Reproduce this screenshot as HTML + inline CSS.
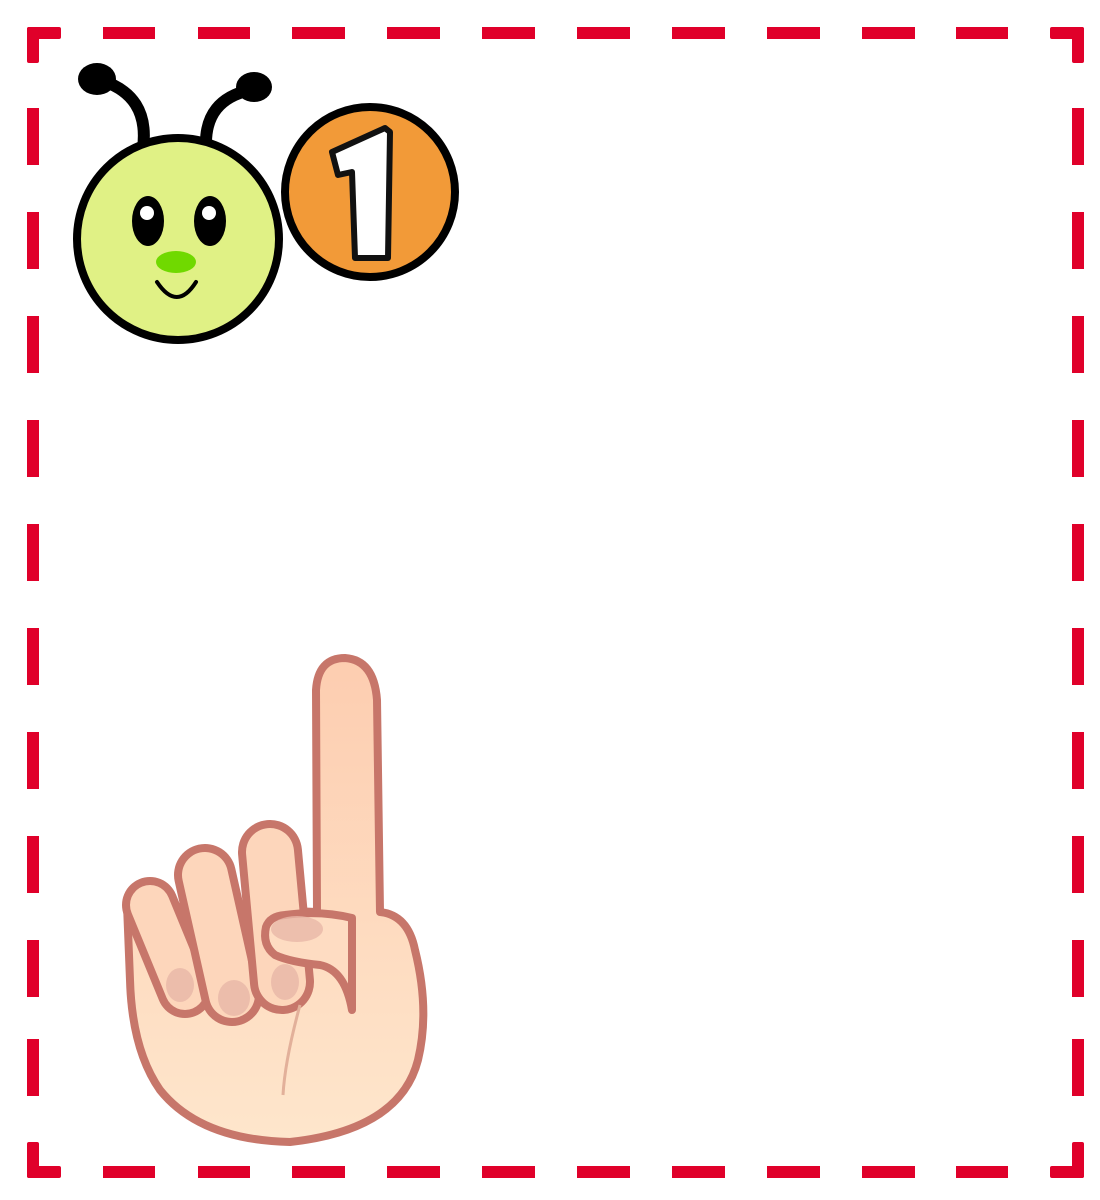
<!DOCTYPE html>
<html><head><meta charset="utf-8"><style>html,body{margin:0;padding:0;background:#fff;width:1100px;height:1200px;overflow:hidden}</style></head>
<body>
<svg width="1100" height="1200" viewBox="0 0 1100 1200" xmlns="http://www.w3.org/2000/svg">
<g fill="#e0002a">
<rect x="27" y="27" width="34" height="12" rx="2"/><rect x="27" y="27" width="12" height="36" rx="2"/>
<rect x="1050" y="27" width="34" height="12" rx="2"/><rect x="1072" y="27" width="12" height="36" rx="2"/>
<rect x="27" y="1166" width="34" height="12" rx="2"/><rect x="27" y="1142" width="12" height="36" rx="2"/>
<rect x="1050" y="1166" width="34" height="12" rx="2"/><rect x="1072" y="1142" width="12" height="36" rx="2"/>
<g id="h">
<rect x="103" y="27" width="52" height="12"/><rect x="198" y="27" width="52" height="12"/><rect x="292" y="27" width="53" height="12"/><rect x="387" y="27" width="53" height="12"/><rect x="482" y="27" width="53" height="12"/><rect x="577" y="27" width="53" height="12"/><rect x="672" y="27" width="53" height="12"/><rect x="767" y="27" width="53" height="12"/><rect x="862" y="27" width="53" height="12"/><rect x="956" y="27" width="52" height="12"/>
</g>
<use href="#h" y="1139"/>
<g id="v">
<rect x="27" y="108" width="12" height="57"/><rect x="27" y="212" width="12" height="57"/><rect x="27" y="316" width="12" height="57"/><rect x="27" y="420" width="12" height="57"/><rect x="27" y="524" width="12" height="57"/><rect x="27" y="628" width="12" height="57"/><rect x="27" y="732" width="12" height="57"/><rect x="27" y="836" width="12" height="57"/><rect x="27" y="940" width="12" height="57"/><rect x="27" y="1039" width="12" height="57"/>
</g>
<use href="#v" x="1045"/>
</g>

<!-- caterpillar -->
<g stroke="#000" stroke-linecap="round" fill="none" stroke-width="12">
<path d="M100 80 Q150 95 143 148"/>
<path d="M250 90 Q205 100 206 145"/>
</g>
<ellipse cx="97" cy="79" rx="19" ry="16" fill="#000"/>
<ellipse cx="254" cy="87" rx="18" ry="15" fill="#000"/>
<circle cx="178" cy="239" r="101" fill="#e0f185" stroke="#000" stroke-width="8"/>
<ellipse cx="148" cy="221" rx="16" ry="25" fill="#000"/>
<ellipse cx="210" cy="221" rx="16" ry="25" fill="#000"/>
<circle cx="147" cy="213" r="7" fill="#fff"/>
<circle cx="209" cy="213" r="7" fill="#fff"/>
<ellipse cx="176" cy="262" rx="20" ry="11" fill="#70d900"/>
<path d="M157 282 Q177 312 196 282" stroke="#000" stroke-width="4" fill="none" stroke-linecap="round"/>
<circle cx="370" cy="192" r="85" fill="#f29a38" stroke="#000" stroke-width="8"/>
<path d="M332 152 L385 128 L390 132 L388 258 L355 258 L352 172 L338 175 Z" fill="#fff" stroke="#111" stroke-width="6" stroke-linejoin="round"/>

<!-- hand -->
<defs><linearGradient id="sk" x1="0" y1="0" x2="0" y2="1"><stop offset="0" stop-color="#fdcdb0"/><stop offset="1" stop-color="#fee6cc"/></linearGradient></defs>
<g stroke="#c7766a" stroke-width="8" stroke-linejoin="round" fill="url(#sk)">
<path d="M317 912 L316 690 Q318 658 345 658 Q374 660 377 700 L380 912 Q408 915 415 950 Q430 1010 418 1060 Q400 1130 290 1142 Q200 1140 160 1090 Q132 1050 130 980 L127 905 Z"/>
</g>
<g stroke-linecap="round" fill="none">
<line x1="150" y1="905" x2="185" y2="990" stroke="#c7766a" stroke-width="56"/>
<line x1="150" y1="905" x2="185" y2="990" stroke="#fdd6bb" stroke-width="40"/>
<line x1="205" y1="875" x2="232" y2="995" stroke="#c7766a" stroke-width="62"/>
<line x1="205" y1="875" x2="232" y2="995" stroke="#fdd6bb" stroke-width="46"/>
<line x1="270" y1="852" x2="282" y2="982" stroke="#c7766a" stroke-width="64"/>
<line x1="270" y1="852" x2="282" y2="982" stroke="#fdd6bb" stroke-width="48"/>
</g>
<path d="M285 915 Q320 910 352 918 L352 1010 Q345 970 320 965 Q290 962 275 955 Q262 945 266 927 Q270 916 285 915 Z" fill="#fedcc2" stroke="#c7766a" stroke-width="8" stroke-linejoin="round"/>
<path d="M300 1005 Q285 1060 283 1095" stroke="#e2b09a" stroke-width="3" fill="none"/>
<g fill="#e9b8a8" opacity="0.8">
<ellipse cx="180" cy="985" rx="14" ry="17"/><ellipse cx="234" cy="998" rx="16" ry="18"/><ellipse cx="285" cy="982" rx="14" ry="18"/><ellipse cx="297" cy="929" rx="26" ry="13"/>
</g>
</svg>
</body></html>
